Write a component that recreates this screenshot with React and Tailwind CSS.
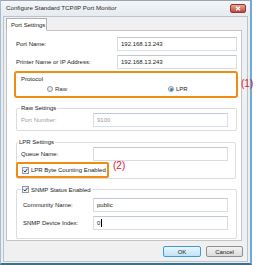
import React from "react";

function Field({ value, disabled, cursor, w = "w-[135px]" }) {
  return (
    <div
      className={`${w} h-[14px] flex items-center pl-[3px] bg-white border border-[#d6dde5] border-t-[#c2c9d1] ${
        disabled ? "text-[#9a9a9a]" : "text-[#1a1a1a]"
      }`}
    >
      <span>{value}</span>
      {cursor && <span className="w-px h-[8px] bg-black ml-[1px]" />}
    </div>
  );
}

function Radio({ checked }) {
  return (
    <span className="w-[6px] h-[6px] rounded-full border border-[#8c98a4] bg-[#e8ecf0] flex items-center justify-center">
      {checked && <span className="w-[3px] h-[3px] rounded-full bg-[#2a7fd0]" />}
    </span>
  );
}

function Check() {
  return (
    <span className="w-[7px] h-[7px] border border-[#8c98a4] bg-[#eef2f6] flex items-center justify-center">
      <svg width="5" height="5" viewBox="0 0 5 5">
        <path d="M0.6 2.6 L2 4 L4.5 0.8" fill="none" stroke="#2b3a55" strokeWidth="1" />
      </svg>
    </span>
  );
}

export default function App() {
  return (
    <div className="w-[279px] h-[265px] bg-white relative overflow-hidden font-['Liberation_Sans',Arial,sans-serif] text-[6px] leading-none text-[#1a1a1a]">
      <div className="w-[252px] h-[265px] flex flex-col bg-[#e9eef3] border-l border-l-[#a8bccf] border-t border-t-[#9aa6b2] border-r-2 border-r-[#6fa9d6] border-b-2 border-b-[#3f6f86]">
        {/* title bar */}
        <div className="h-[15px] flex items-center pl-[5px] pr-[4px] bg-gradient-to-b from-[#f4f6f8] to-[#e6ebf0]">
          <span className="text-[6.2px] text-[#2a2a2a]">Configure Standard TCP/IP Port Monitor</span>
          <div className="ml-auto w-[16px] h-[9px] rounded-[2px] border border-[#8a3a30] bg-gradient-to-b from-[#e8a69a] to-[#c0473a] flex items-center justify-center">
            <svg width="6" height="5" viewBox="0 0 6 5">
              <path d="M1 0.8 L5 4.2 M5 0.8 L1 4.2" stroke="#fff" strokeWidth="1.2" />
            </svg>
          </div>
        </div>
        {/* client */}
        <div className="flex-1 ml-[2px] mr-[2px] mb-[1px] bg-[#f0f0f0] border border-[#b9c3cd] flex flex-col pl-[2px] pt-[1px]">
          {/* tab */}
          <div className="relative z-10 -mb-px w-[41px] h-[13px] bg-white border border-[#b0b0b0] border-b-white flex items-center pl-[4px]">
            Port Settings
          </div>
          {/* panel */}
          <div className="w-[236px] h-[211px] bg-white border border-[#c4c4c4] flex flex-col">
            <div className="mt-[6px] flex items-center pl-[9px] pr-[4px]">
              <span>Port Name:</span>
              <div className="ml-auto"><Field value="192.168.13.243" w="w-[120px]" /></div>
            </div>
            <div className="mt-[4px] flex items-center pl-[9px] pr-[4px]">
              <span>Printer Name or IP Address:</span>
              <div className="ml-auto"><Field value="192.168.13.243" w="w-[120px]" /></div>
            </div>
            {/* protocol */}
            <div className="mt-[2px] ml-[7px] mr-[3px] h-[27px] rounded-[3px] border-2 border-[#f08c10] flex flex-col">
              <span className="ml-[5px] mt-[3px]">Protocol</span>
              <div className="flex items-center mt-[4px]">
                <div className="ml-[31px] flex items-center gap-[2px] text-[#333]">
                  <Radio />
                  <span>Raw</span>
                </div>
                <div className="ml-[101px] flex items-center gap-[2px]">
                  <Radio checked />
                  <span>LPR</span>
                </div>
              </div>
            </div>
            {/* raw settings */}
            <div className="mt-[10px] ml-[9px] mr-[4px] h-[23px] rounded-[2px] border border-[#dcdcdc] relative flex items-center">
              <span className="absolute left-[3px] -top-[4px] bg-white px-px">Raw Settings</span>
              <span className="ml-[4px] text-[#a0a0a0]">Port Number:</span>
              <div className="ml-auto mr-[8px]"><Field value="9100" disabled /></div>
            </div>
            {/* lpr settings */}
            <div className="mt-[11px] ml-[9px] mr-[5px] h-[37px] rounded-[2px] border border-[#dcdcdc] relative flex flex-col">
              <span className="absolute left-[1px] -top-[4px] bg-white px-px">LPR Settings</span>
              <div className="mt-[4px] flex items-center">
                <span className="ml-[4px]">Queue Name:</span>
                <div className="ml-auto mr-[7px]"><Field value="" /></div>
              </div>
              <div className="mt-[1px] -ml-px w-[93px] h-[17px] rounded-[2px] border-2 border-[#f08c10] flex items-center gap-[2px] pl-[4px]">
                <Check />
                <span>LPR Byte Counting Enabled</span>
              </div>
            </div>
            {/* snmp */}
            <div className="mt-[10px] ml-[9px] mr-[4px] h-[50px] rounded-[2px] border border-[#dcdcdc] relative flex flex-col">
              <div className="absolute left-[4px] -top-[4px] bg-white px-px flex items-center gap-[2px]">
                <Check />
                <span>SNMP Status Enabled</span>
              </div>
              <div className="mt-[8px] flex items-center">
                <span className="ml-[6px]">Community Name:</span>
                <div className="ml-auto mr-[8px]"><Field value="public" /></div>
              </div>
              <div className="mt-[4px] flex items-center">
                <span className="ml-[6px]">SNMP Device Index:</span>
                <div className="ml-auto mr-[8px]"><Field value="0" cursor /></div>
              </div>
            </div>
          </div>
          {/* buttons */}
          <div className="mt-[5px] flex items-center gap-[5px] pl-[157px]">
            <div className="w-[38px] h-[11px] rounded-[2px] border border-[#3c9ad8] bg-gradient-to-b from-[#eaf6fd] to-[#bfe2f7] flex items-center justify-center">
              OK
            </div>
            <div className="w-[37px] h-[11px] rounded-[2px] border border-[#8e8f8f] bg-gradient-to-b from-[#f2f2f2] to-[#dcdcdc] flex items-center justify-center">
              Cancel
            </div>
          </div>
        </div>
      </div>
      <span className="absolute left-[241px] top-[79px] text-[10px] text-[#e3132b]">(1)</span>
      <span className="absolute left-[113px] top-[161px] text-[10px] text-[#e3132b]">(2)</span>
    </div>
  );
}
